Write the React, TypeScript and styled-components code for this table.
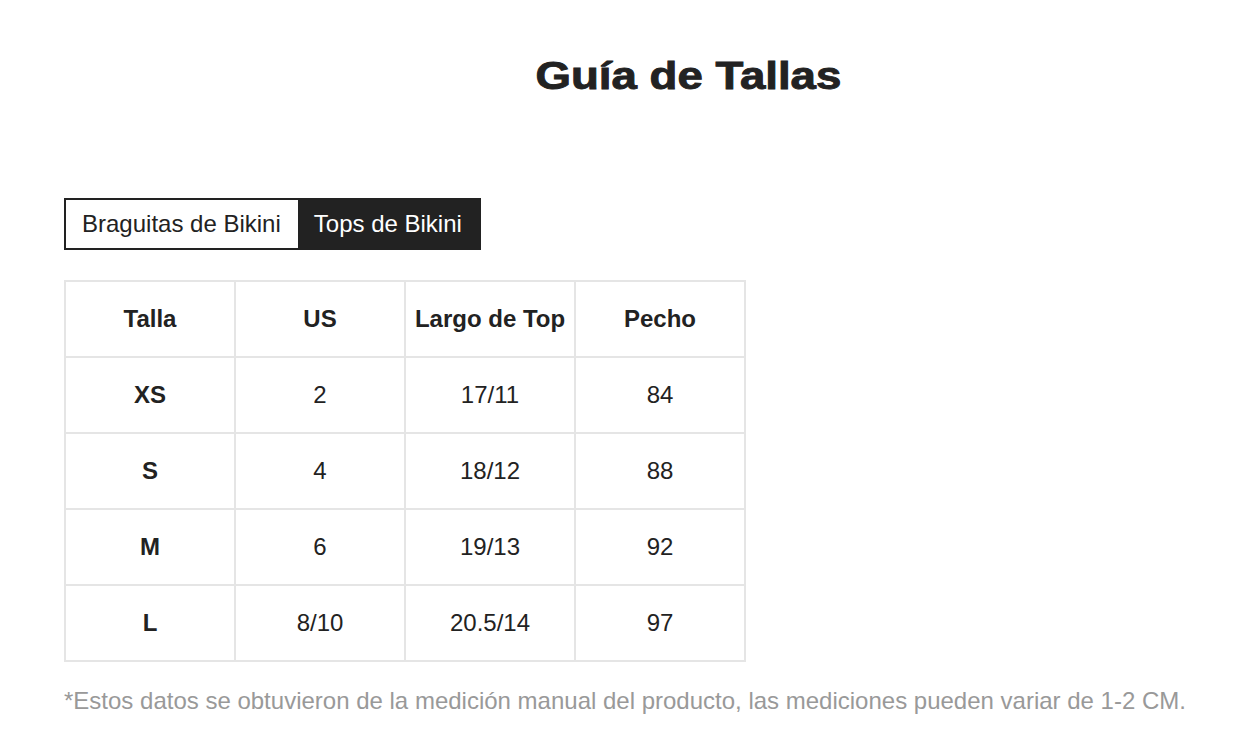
import { useState } from "react";
import styled, { createGlobalStyle } from "styled-components";

const GlobalStyle = createGlobalStyle`
  html, body {
    margin: 0;
    padding: 0;
    background: #fff;
    font-family: "Liberation Sans", Arial, Helvetica, sans-serif;
    color: #222;
  }
`;

const Page = styled.div`
  width: 1250px;
  min-height: 754px;
  box-sizing: border-box;
  padding: 54px 0 0 64px;
`;

const Title = styled.h1`
  margin: 0 0 0 62px;
  text-align: center;
  font-size: 38px;
  font-weight: 700;
  line-height: 44px;
  color: #222;
`;

const TitleText = styled.span`
  display: inline-block;
  transform: scaleX(1.2);
  -webkit-text-stroke: 0.9px #222;
`;

const Tabs = styled.div`
  display: inline-flex;
  margin-top: 100px;
  border: 2px solid #222;
`;

const Tab = styled.button<{ $active: boolean }>`
  border: none;
  margin: 0;
  height: 48px;
  padding: 0 17px 0 16px;
  font-family: inherit;
  font-size: 24px;
  cursor: pointer;
  background: ${({ $active }) => ($active ? "#222" : "#fff")};
  color: ${({ $active }) => ($active ? "#fff" : "#222")};
`;

const Table = styled.table`
  margin-top: 30px;
  border-collapse: collapse;
  border: 2px solid #e5e5e5;
`;

const Cell = styled.td<{ $bold?: boolean }>`
  width: 168px;
  height: 74px;
  padding: 0;
  border: 2px solid #e5e5e5;
  text-align: center;
  vertical-align: middle;
  font-size: 24px;
  font-weight: ${({ $bold }) => ($bold ? 700 : 400)};
  color: #222;
`;

const Note = styled.p`
  margin: 25px 0 0;
  font-size: 24px;
  line-height: 28px;
  color: #999;
`;

const header = ["Talla", "US", "Largo de Top", "Pecho"];
const rows = [
  ["XS", "2", "17/11", "84"],
  ["S", "4", "18/12", "88"],
  ["M", "6", "19/13", "92"],
  ["L", "8/10", "20.5/14", "97"],
];

const App = () => {
  const [tab, setTab] = useState(1);
  return (
    <Page>
      <GlobalStyle />
      <Title>
        <TitleText>Guía de Tallas</TitleText>
      </Title>
      <Tabs>
        <Tab $active={tab === 0} onClick={() => setTab(0)}>
          Braguitas de Bikini
        </Tab>
        <Tab $active={tab === 1} onClick={() => setTab(1)}>
          Tops de Bikini
        </Tab>
      </Tabs>
      <div>
        <Table>
          <thead>
            <tr>
              {header.map((h) => (
                <Cell as="th" key={h} $bold>
                  {h}
                </Cell>
              ))}
            </tr>
          </thead>
          <tbody>
            {rows.map((r) => (
              <tr key={r[0]}>
                {r.map((v, i) => (
                  <Cell key={i} $bold={i === 0}>
                    {v}
                  </Cell>
                ))}
              </tr>
            ))}
          </tbody>
        </Table>
      </div>
      <Note>
        *Estos datos se obtuvieron de la medición manual del producto, las
        mediciones pueden variar de 1-2 CM.
      </Note>
    </Page>
  );
};

export default App;
